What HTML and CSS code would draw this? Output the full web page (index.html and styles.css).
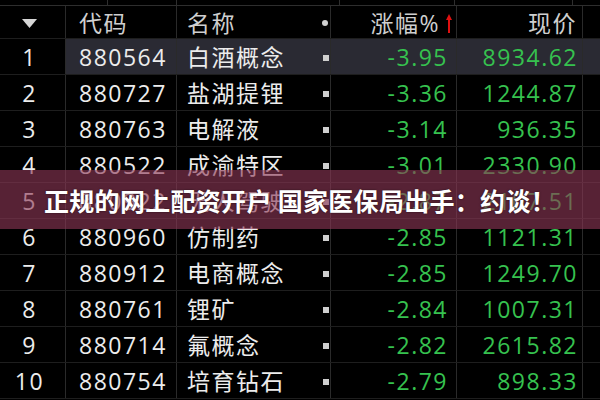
FILE: index.html
```html
<!DOCTYPE html>
<html>
<head>
<meta charset="utf-8">
<link rel="stylesheet" href="styles.css">
</head>
<body>
<div class="screen">
  <div class="topstrip"><span></span><span></span><span></span><span></span><span></span><span></span></div>
  <div class="row head">
    <div class="c idx"><svg width="15" height="9" viewBox="0 0 15 9"><polygon points="0,0 15,0 7.5,9" fill="#d6d6d6"/></svg></div>
    <div class="c code">代码</div>
    <div class="c name">名称<i class="hdot"></i></div>
    <div class="c chg">涨幅%<svg class="arrow" width="6" height="19" viewBox="0 0 6 19"><polygon points="3,0 6,6 4,6 4,19 2,19 2,6 0,6" fill="#e01010"/></svg></div>
    <div class="c price">现价</div>
    <div class="c tail"></div>
  </div>
  <div class="row sel">
    <div class="c idx">1</div><div class="c code">880564</div><div class="c name">白酒概念<i class="sq"></i></div><div class="c chg">-3.95</div><div class="c price">8934.62</div><div class="c tail"></div>
  </div>
  <div class="row">
    <div class="c idx">2</div><div class="c code">880727</div><div class="c name">盐湖提锂<i class="sq"></i></div><div class="c chg">-3.36</div><div class="c price">1244.87</div><div class="c tail"></div>
  </div>
  <div class="row">
    <div class="c idx">3</div><div class="c code">880763</div><div class="c name">电解液<i class="sq"></i></div><div class="c chg">-3.14</div><div class="c price">936.35</div><div class="c tail"></div>
  </div>
  <div class="row">
    <div class="c idx">4</div><div class="c code">880522</div><div class="c name">成渝特区<i class="sq"></i></div><div class="c chg">-3.01</div><div class="c price">2330.90</div><div class="c tail"></div>
  </div>
  <div class="row">
    <div class="c idx">5</div><div class="c code">880922</div><div class="c name">无人驾驶<i class="sq"></i></div><div class="c chg">-2.87</div><div class="c price">2107.51</div><div class="c tail"></div>
  </div>
  <div class="row">
    <div class="c idx">6</div><div class="c code">880960</div><div class="c name">仿制药<i class="sq"></i></div><div class="c chg">-2.85</div><div class="c price">1121.31</div><div class="c tail"></div>
  </div>
  <div class="row">
    <div class="c idx">7</div><div class="c code">880912</div><div class="c name">电商概念<i class="sq"></i></div><div class="c chg">-2.85</div><div class="c price">1249.70</div><div class="c tail"></div>
  </div>
  <div class="row">
    <div class="c idx">8</div><div class="c code">880761</div><div class="c name">锂矿<i class="sq"></i></div><div class="c chg">-2.84</div><div class="c price">1007.31</div><div class="c tail"></div>
  </div>
  <div class="row">
    <div class="c idx">9</div><div class="c code">880714</div><div class="c name">氟概念<i class="sq"></i></div><div class="c chg">-2.82</div><div class="c price">2615.82</div><div class="c tail"></div>
  </div>
  <div class="row">
    <div class="c idx">10</div><div class="c code">880754</div><div class="c name">培育钻石<i class="sq"></i></div><div class="c chg">-2.79</div><div class="c price">898.33</div><div class="c tail"></div>
  </div>
  <div class="banner">正规的网上配资开户 国家医保局出手：约谈！</div>
</div>
</body>
</html>
```
FILE: styles.css
```css
* { box-sizing: border-box; }
html, body { margin: 0; padding: 0; background: #000; }
.screen {
  position: relative;
  width: 600px;
  height: 400px;
  overflow: hidden;
  background: #000;
  font-family: "Open Sans", "Noto Sans CJK SC", sans-serif;
  font-size: 23px;
  letter-spacing: 1.5px;
  color: #ececec;
}
.topstrip {
  display: grid;
  grid-template-columns: 108px 69px 163px 115px 118px 27px;
  height: 6px;
  border-bottom: 1px solid #2e2e2e;
}
.topstrip span { border-right: 1px solid #2e2e2e; }
.topstrip span:last-child { border-right: none; }
.row {
  display: grid;
  grid-template-columns: 66px 111px 154px 126px 126px 17px;
  height: 36px;
  border-bottom: 1px solid #1e1e1e;
}
.row.head { height: 33px; color: #cfcfcf; }
.c {
  display: flex;
  align-items: center;
  border-right: 1px solid #2a2a2a;
  white-space: nowrap;
  line-height: 1;
  padding-top: 2px;
}
.c.tail { border-right: none; }
.idx { justify-content: center; padding-right: 6px; }
.code { padding-left: 13px; }
.name { padding-left: 10px; justify-content: space-between; padding-right: 1px; }
.chg { justify-content: flex-end; padding-right: 8px; color: #36c24f; }
.price { justify-content: flex-end; padding-right: 4px; color: #36c24f; }
.head .chg, .head .price { color: #cfcfcf; }
.head .chg { padding-right: 4px; }
.head .price { padding-right: 5px; }
.arrow { margin-left: 6px; }
.sq { width: 6px; height: 6px; background: #cfcfcf; display: block; margin-right: 0; }
.hdot { width: 6px; height: 6px; border-radius: 50%; background: #d0d0d0; display: block; margin-right: 1px; }
.sel .c:not(.idx) { background: #2a2a33; }
.banner {
  position: absolute;
  left: 0;
  right: 0;
  top: 170px;
  height: 59px;
  display: flex;
  align-items: center;
  justify-content: center;
  background: rgba(140, 55, 85, 0.62);
  color: #fff;
  font-family: "Noto Sans CJK SC", sans-serif;
  font-weight: 700;
  font-size: 25px;
  letter-spacing: 0.3px;
  text-shadow: 0 0 2px rgba(0,0,0,0.6);
}
```
